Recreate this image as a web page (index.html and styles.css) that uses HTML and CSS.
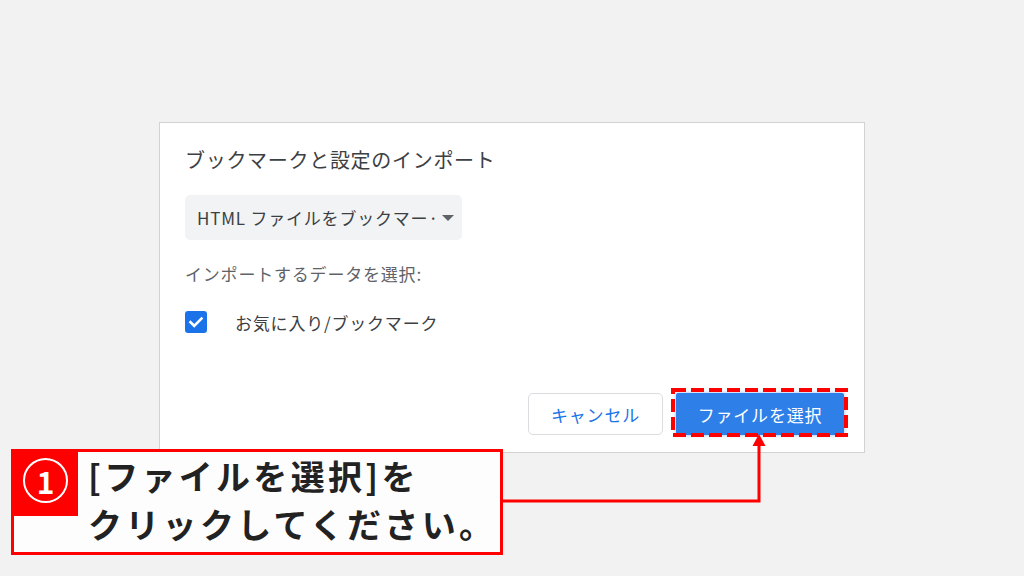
FILE: index.html
```html
<!DOCTYPE html>
<html lang="ja">
<head>
<meta charset="utf-8">
<title>ブックマークと設定のインポート</title>
<link rel="stylesheet" href="styles.css">
</head>
<body>
<div class="page">
  <div class="dialog">
    <div class="title">ブックマークと設定のインポート</div>
    <div class="select">
      <span class="select-text">HTML ファイルをブックマー·</span>
      <span class="caret"></span>
    </div>
    <div class="label">インポートするデータを選択:</div>
    <div class="check-row">
      <span class="checkbox">
        <svg width="22" height="22" viewBox="0 0 22 22"><path d="M5.5 11.2 L9.2 14.8 L16.5 7.5" fill="none" stroke="#fff" stroke-width="2.6" stroke-linecap="square"/></svg>
      </span>
      <span class="check-label">お気に入り/ブックマーク</span>
    </div>
    <div class="actions">
      <button class="btn btn-cancel">キャンセル</button>
      <span class="highlight-wrap">
        <button class="btn btn-primary">ファイルを選択</button>
        <svg class="highlight" width="177" height="49" viewBox="0 0 177 49"><rect x="2" y="2" width="173" height="45" fill="none" stroke="#ff0000" stroke-width="4" stroke-dasharray="13 5"/></svg>
      </span>
    </div>
  </div>
</div>

<svg class="connector" width="280" height="80" viewBox="500 430 280 80">
  <path d="M503 501 H759 V444" fill="none" stroke="#ff0000" stroke-width="3"/>
  <polygon points="759,434 752.5,446 765.5,446" fill="#ff0000"/>
</svg>

<div class="callout">
  <div class="badge"><span class="circle">1</span></div>
  <div class="callout-text">[ファイルを選択]を<br>クリックしてください。</div>
</div>
</body>
</html>
```

FILE: styles.css
```css
* { box-sizing: border-box; }

html, body {
  margin: 0;
  padding: 0;
}

body {
  width: 1024px;
  height: 576px;
  overflow: hidden;
  background: #f2f2f2;
  font-family: "Noto Sans CJK JP", "Noto Sans", sans-serif;
  position: relative;
}

.page {
  padding: 122px 0 0 159px;
}

.dialog {
  width: 706px;
  height: 331px;
  background: #fff;
  border: 1px solid #d2d2d2;
  padding: 23px 20px 0 25px;
  display: flex;
  flex-direction: column;
}

.title {
  font-size: 20px;
  line-height: 28px;
  letter-spacing: 0.7px;
  color: #3c4043;
}

.select {
  margin-top: 21px;
  width: 277px;
  height: 45px;
  background: #f1f3f4;
  border-radius: 5px;
  padding-left: 12px;
  display: flex;
  align-items: center;
  gap: 3px;
}

.select-text {
  font-size: 17px;
  letter-spacing: 0.8px;
  color: #3c4043;
  white-space: nowrap;
}

.caret {
  width: 0;
  height: 0;
  border-left: 6px solid transparent;
  border-right: 6px solid transparent;
  border-top: 6px solid #5f6368;
}

.label {
  margin-top: 22px;
  font-size: 17px;
  line-height: 24px;
  letter-spacing: 0.8px;
  color: #5f6368;
}

.check-row {
  margin-top: 25px;
  display: flex;
  align-items: center;
  gap: 28px;
  height: 22px;
}

.checkbox {
  width: 22px;
  height: 22px;
  border-radius: 3px;
  background: #1a73e8;
  display: flex;
}

.check-label {
  font-size: 17px;
  letter-spacing: 0.8px;
  color: #3c4043;
}

.actions {
  margin-top: 60px;
  display: flex;
  justify-content: flex-end;
  gap: 13px;
}

.btn {
  height: 42px;
  font-family: "Noto Sans CJK JP", "Noto Sans", sans-serif;
  font-size: 17px;
  letter-spacing: 0.8px;
  padding: 0;
  cursor: pointer;
}

.btn-cancel {
  width: 135px;
  background: #fff;
  color: #1a73e8;
  border: 1px solid #dadce0;
  border-radius: 5px;
}

.highlight-wrap {
  position: relative;
  display: flex;
}

.btn-primary {
  width: 168px;
  background: #2f7fe8;
  color: #fff;
  border: none;
  border-radius: 2px;
  box-shadow: 0 0 4px rgba(47, 127, 232, 0.5);
}

.highlight {
  position: absolute;
  left: -5px;
  top: -5px;
  pointer-events: none;
}

.connector {
  position: absolute;
  left: 500px;
  top: 430px;
}

.callout {
  position: absolute;
  left: 11px;
  top: 449px;
  width: 492px;
  height: 106px;
  border: 3px solid #ff0000;
  background: #fdfdfd;
  display: flex;
  align-items: flex-start;
}

.badge {
  flex-shrink: 0;
  width: 64px;
  height: 64px;
  background: #ff0000;
  padding: 6px 0 0 9px;
}

.circle {
  display: flex;
  align-items: center;
  justify-content: center;
  width: 45px;
  height: 45px;
  border: 2px solid #fff;
  border-radius: 50%;
  color: #fff;
  font-family: "Noto Sans CJK JP", sans-serif;
  font-weight: 700;
  font-size: 30px;
  line-height: 1;
}

.callout-text {
  margin-left: 10px;
  font-size: 34px;
  font-weight: 700;
  line-height: 48px;
  letter-spacing: 3.3px;
  color: #222;
  white-space: nowrap;
}
```
